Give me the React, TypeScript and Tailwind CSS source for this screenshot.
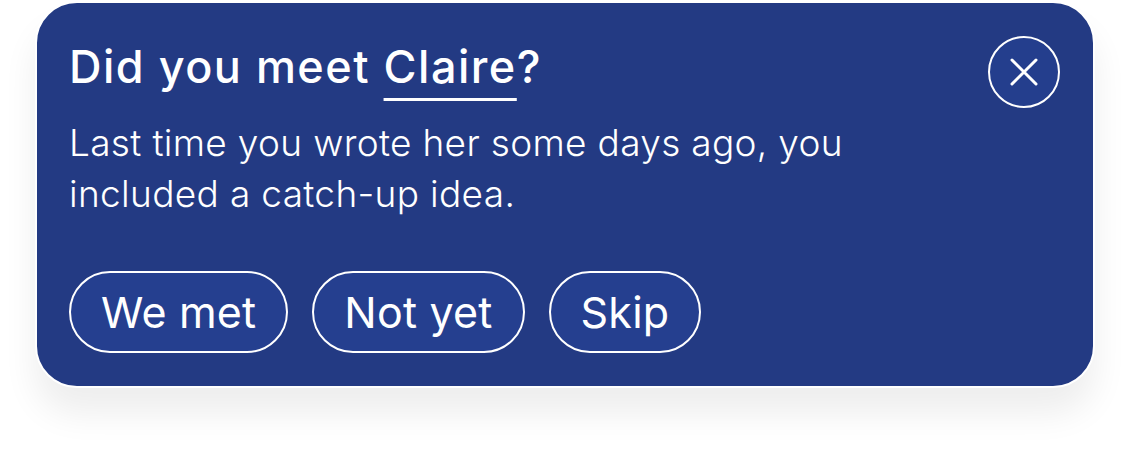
import { useState } from "react";

const answers = ["We met", "Not yet", "Skip"];

export default function App() {
  const [picked, setPicked] = useState<string | null>(null);

  return (
    <div
      className="min-h-screen bg-white"
      style={{ fontFamily: "Inter, 'Noto Sans', sans-serif" }}
    >
      <div className="ml-[35px] mt-[1px] w-[1060px] rounded-[42px] border-2 border-white bg-[#233a83] shadow-[0_26px_34px_rgba(0,0,0,0.07)]">
        <div className="flex items-start justify-between pb-[33px] pl-[32px] pr-[33px] pt-[33px]">
          <div className="text-white">
            <h2 className="text-[45px] font-medium leading-[62px] tracking-[1.5px]">
              Did you meet{" "}
              <span className="underline decoration-[3px] underline-offset-[15px]">
                Claire
              </span>
              ?
            </h2>
            <p className="mt-[19px] max-w-[820px] text-[37px] font-light leading-[51px] tracking-[0.33px]">
              Last time you wrote her some days ago, you included a catch-up idea.
            </p>
            <div className="mt-[52px] flex gap-[24px]">
              {answers.map((answer) => (
                <button
                  key={answer}
                  type="button"
                  onClick={() => setPicked(answer)}
                  className={`h-[82px] rounded-full border-2 border-white px-[30px] text-[43px] leading-[78px] tracking-[0.2px] text-white ${
                    picked === answer ? "bg-[#2d4aa0]" : "bg-[#253f8f]"
                  }`}
                >
                  {answer}
                </button>
              ))}
            </div>
          </div>
          <button
            type="button"
            aria-label="Close"
            className="flex h-[72px] w-[72px] shrink-0 items-center justify-center rounded-full border-2 border-white bg-[#243e8d]"
          >
            <svg width="28" height="28" viewBox="0 0 28 28" fill="none">
              <path
                d="M2 2 26 26M26 2 2 26"
                stroke="white"
                strokeWidth="3"
                strokeLinecap="round"
              />
            </svg>
          </button>
        </div>
      </div>
    </div>
  );
}
